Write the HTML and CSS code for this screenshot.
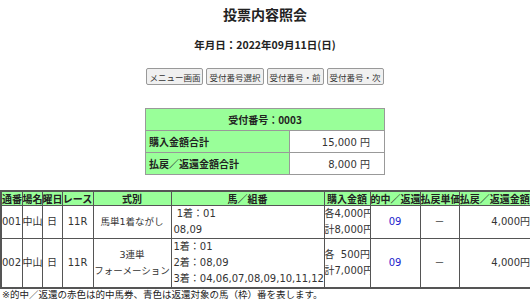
FILE: index.html
```html
<!DOCTYPE html>
<html lang="ja">
<head>
  <meta charset="UTF-8" />
  <title>投票内容照会</title>
  <link rel="stylesheet" href="styles.css">
</head>
<body>
  <div class="page">
    <h1 class="title">投票内容照会</h1>
    <div class="date">年月日：2022年09月11日(日)</div>

    <div class="buttons">
      <button class="btn">メニュー画面</button>
      <button class="btn">受付番号選択</button>
      <button class="btn">受付番号・前</button>
      <button class="btn">受付番号・次</button>
    </div>

    <table class="summary">
      <tr>
        <th colspan="2" class="center">受付番号：0003</th>
      </tr>
      <tr>
        <th>購入金額合計</th>
        <td>15,000 円</td>
      </tr>
      <tr>
        <th>払戻／返還金額合計</th>
        <td>8,000 円</td>
      </tr>
    </table>

    <table class="detail">
      <colgroup>
        <col style="width: 21px">
        <col style="width: 20px">
        <col style="width: 20px">
        <col style="width: 31px">
        <col style="width: 78px">
        <col style="width: 153px">
        <col style="width: 46px">
        <col style="width: 50px">
        <col style="width: 39px">
        <col style="width: 72px">
      </colgroup>
      <tr>
        <th>通番</th>
        <th>場名</th>
        <th>曜日</th>
        <th>レース</th>
        <th>式別</th>
        <th>馬／組番</th>
        <th>購入金額</th>
        <th>的中／返還</th>
        <th>払戻単価</th>
        <th>払戻／返還金額</th>
      </tr>
      <tr>
        <td>001</td>
        <td>中山</td>
        <td class="center">日</td>
        <td class="center">11R</td>
        <td class="center type">馬単1着ながし</td>
        <td class="left">&nbsp;1着：01<br>08,09</td>
        <td class="right">各4,000円<br>計8,000円</td>
        <td class="center blue">09</td>
        <td class="center">－</td>
        <td class="right">4,000円</td>
      </tr>
      <tr class="tall">
        <td>002</td>
        <td>中山</td>
        <td class="center">日</td>
        <td class="center">11R</td>
        <td class="center type">3連単<br>フォーメーション</td>
        <td class="left">1着：01<br>2着：08,09<br>3着：04,06,07,08,09,10,11,12</td>
        <td class="right">各&nbsp;&nbsp;500円<br>計7,000円</td>
        <td class="center blue">09</td>
        <td class="center">－</td>
        <td class="right">4,000円</td>
      </tr>
    </table>

    <p class="note">※的中／返還の赤色は的中馬券、青色は返還対象の馬（枠）番を表します。</p>
  </div>
</body>
</html>
```

FILE: styles.css
```css
body {
  margin: 0;
  font-family: "DejaVu Sans", "Noto Sans CJK JP", sans-serif;
  color: #222;
  background: #fff;
}

.page {
  display: flex;
  flex-direction: column;
  align-items: center;
}

.title {
  margin: 5px 0 0;
  font-family: "Noto Sans CJK JP", sans-serif;
  font-size: 14px;
  line-height: 18px;
  font-weight: bold;
}

.date {
  margin-top: 15px;
  font-family: "Noto Sans CJK JP", sans-serif;
  font-size: 10.5px;
  line-height: 14px;
  font-weight: bold;
}

.buttons {
  display: flex;
  gap: 3px;
  margin-top: 16px;
}

.btn {
  font-family: "Noto Sans CJK JP", sans-serif;
  font-size: 8.5px;
  line-height: 12px;
  padding: 1px 2px;
  height: 17px;
  color: #333;
  background: #f0f0f0;
  border: 1px solid #999;
  border-radius: 2px;
}

.summary {
  margin-top: 23px;
  width: 240px;
  border-collapse: collapse;
  border: 1px solid #777;
  font-size: 10px;
}

.summary th,
.summary td {
  height: 21px;
  padding: 0 3px;
  border: 1px solid #999;
}

.summary th {
  background: #99ff99;
  text-align: left;
  font-family: "Noto Sans CJK JP", sans-serif;
  font-weight: bold;
  width: 137px;
}

.summary th.center {
  text-align: center;
}

.summary td {
  text-align: right;
  padding-right: 14px;
  color: #333;
}

.detail {
  margin-top: 15px;
  align-self: flex-start;
  width: 530px;
  border-collapse: collapse;
  border: 2px solid #555;
  font-size: 10px;
  line-height: 16px;
  table-layout: fixed;
}

.detail th {
  background: #99ff99;
  font-family: "Noto Sans CJK JP", sans-serif;
  font-weight: bold;
  line-height: 13px;
  padding: 0;
  white-space: nowrap;
  overflow: hidden;
  border: 1px solid #555;
}

.detail td {
  padding: 0;
  height: 32px;
  border: 1px solid #555;
  color: #333;
  white-space: nowrap;
  overflow: hidden;
}

.detail tr.tall td {
  height: 47px;
}

.detail .center { text-align: center; }
.detail .right { text-align: right; }
.detail .left { text-align: left; padding-left: 2px; }
.detail .blue { color: #2222cc; }
.detail .type { font-size: 9.5px; }

.note {
  align-self: flex-start;
  margin: 0 0 0 2px;
  font-size: 9.5px;
  line-height: 12px;
  color: #222;
}
```
